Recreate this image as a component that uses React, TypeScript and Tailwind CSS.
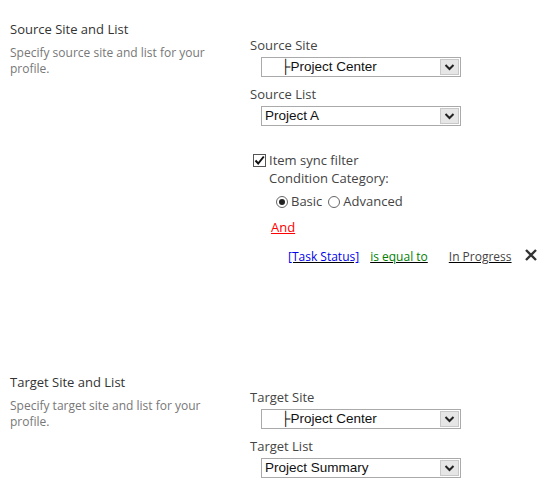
const label = "text-[13px] text-[#444] leading-[17px]";
const desc = "text-[12px] text-[#777] leading-[16px]";

const Chevron = () => (
  <svg width="11" height="8" viewBox="0 0 11 8">
    <path d="M1.5 2 L5.5 6 L9.5 2" fill="none" stroke="#222" strokeWidth="2" />
  </svg>
);

const Select = ({ value, indent }: { value: string; indent?: boolean }) => (
  <div className="flex w-[200px] h-[20px] border border-[#aaa] bg-white">
    <div
      className={`flex-1 flex items-center text-[13.5px] text-[#111] ${indent ? "pl-[19px]" : "pl-[3px]"}`}
      style={{ fontFamily: '"Liberation Sans", Arial, sans-serif' }}
    >
      {value}
    </div>
    <div className="w-[19px] m-[1px] bg-[#e6e6e6] border border-[#c8c8c8] flex items-center justify-center">
      <Chevron />
    </div>
  </div>
);

const Section = ({
  title,
  text,
  children,
}: {
  title: string;
  text: string;
  children: React.ReactNode;
}) => (
  <div className="flex">
    <div className="w-[240px] pl-[10px] shrink-0">
      <div className="text-[13px] text-[#333] leading-[17px]">{title}</div>
      <div className={`${desc} mt-[7px] w-[205px]`}>{text}</div>
    </div>
    <div className="flex-1">{children}</div>
  </div>
);

export default function App() {
  return (
    <div
      className="w-[557px] h-[482px] bg-white overflow-hidden pt-[21px]"
      style={{ fontFamily: '"Open Sans", "Noto Sans", sans-serif' }}
    >
      <Section title="Source Site and List" text="Specify source site and list for your profile.">
        <div className="pt-[16px] pl-[10px]">
          <div className={label}>Source Site</div>
          <div className="mt-[3px] ml-[11px]">
            <Select value="├Project Center" indent />
          </div>
          <div className={`${label} mt-[9px]`}>Source List</div>
          <div className="mt-[3px] ml-[11px]">
            <Select value="Project A" />
          </div>
          <div className="mt-[26px] flex items-center gap-[3px] ml-[3px]">
            <div className="w-[13px] h-[13px] border border-[#555] bg-white flex items-center justify-center">
              <svg width="11" height="11" viewBox="0 0 11 11">
                <path d="M1.5 5.5 L4.2 8.5 L9.8 1.5" fill="none" stroke="#111" strokeWidth="2" />
              </svg>
            </div>
            <span className={label}>Item sync filter</span>
          </div>
          <div className={`${label} ml-[19px] mt-[1px]`}>Condition Category:</div>
          <div className="flex items-center ml-[26px] mt-[5px] text-[13px] text-[#444]">
            <span className="w-[12px] h-[12px] rounded-full border border-[#666] flex items-center justify-center">
              <span className="w-[6px] h-[6px] rounded-full bg-[#222]" />
            </span>
            <span className="ml-[3px]">Basic</span>
            <span className="ml-[6px] w-[12px] h-[12px] rounded-full border border-[#666]" />
            <span className="ml-[3px]">Advanced</span>
          </div>
          <div className="ml-[21px] mt-[6px] text-[13px] text-[#ff0000] underline">And</div>
          <div className="flex items-center mt-[11px] ml-[38px] text-[12px] underline">
            <span className="text-[#0000ee]">[Task Status]</span>
            <span className="text-[#008000] ml-[11px]">is equal to</span>
            <span className="text-[#444] ml-[21px]">In Progress</span>
            <svg className="ml-[12px] -mt-[5px]" width="14" height="14" viewBox="0 0 14 14">
              <path d="M2 2 L12 12 M12 2 L2 12" stroke="#333" strokeWidth="2.4" />
            </svg>
          </div>
        </div>
      </Section>
      <div className="h-[108px]" />
      <Section title="Target Site and List" text="Specify target site and list for your profile.">
        <div className="pt-[15px] pl-[10px]">
          <div className={label}>Target Site</div>
          <div className="mt-[3px] ml-[11px]">
            <Select value="├Project Center" indent />
          </div>
          <div className={`${label} mt-[9px]`}>Target List</div>
          <div className="mt-[3px] ml-[11px]">
            <Select value="Project Summary" />
          </div>
        </div>
      </Section>
    </div>
  );
}
